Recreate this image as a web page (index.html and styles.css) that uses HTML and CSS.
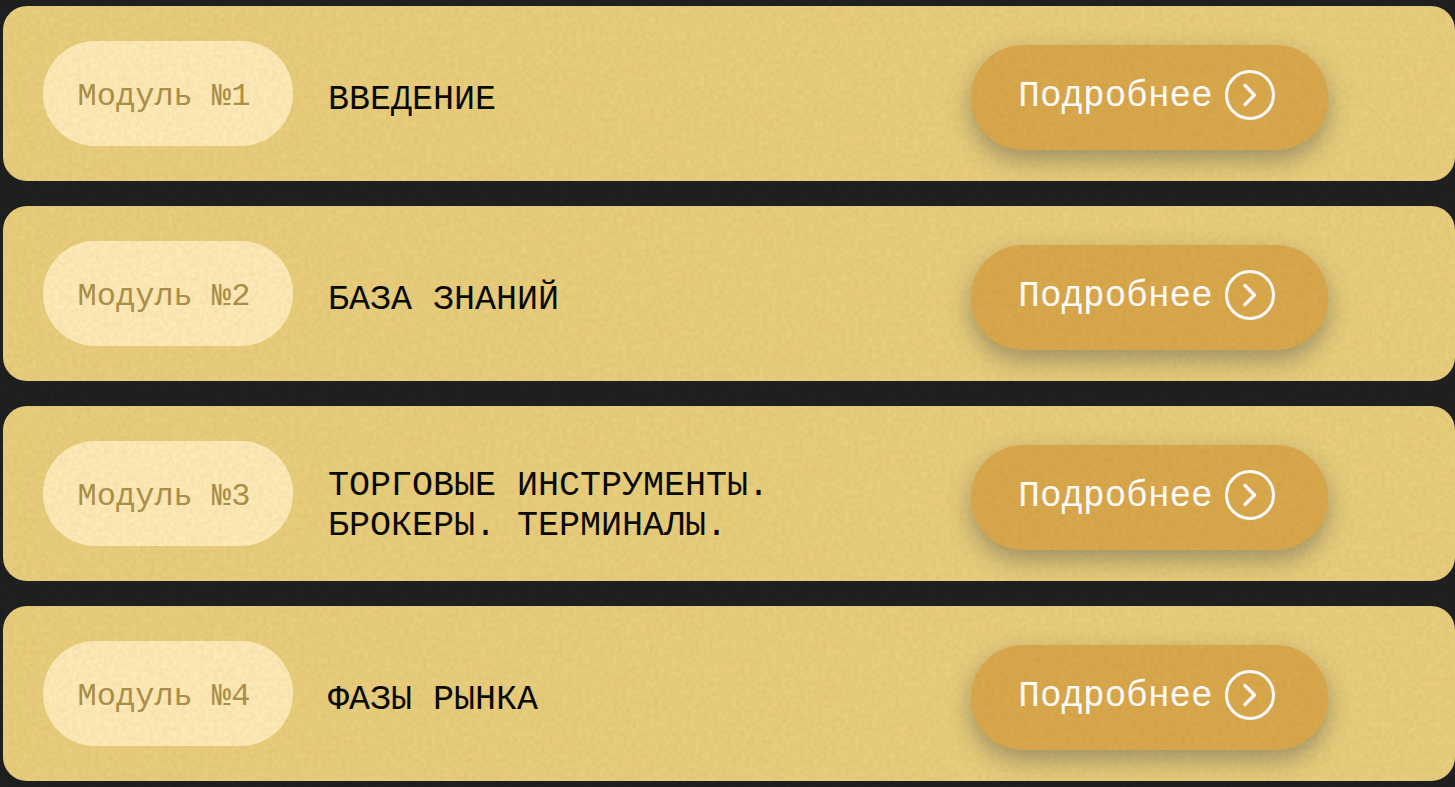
FILE: index.html
```html
<!DOCTYPE html>
<html lang="ru">
<head>
<meta charset="utf-8">
<meta name="viewport" content="width=device-width, initial-scale=1">
<title>Модули</title>
<link rel="stylesheet" href="styles.css">
</head>
<body>
<svg class="defs" aria-hidden="true">
  <symbol id="arrow" viewBox="0 0 50 50">
    <circle cx="25" cy="25" r="23.5" fill="none" stroke="currentColor" stroke-width="3"/>
    <path d="M20 15.5L29.5 25L20 34.5" fill="none" stroke="currentColor" stroke-width="3.4" stroke-linecap="round" stroke-linejoin="round"/>
  </symbol>
</svg>
<main class="modules">
  <article class="card">
    <span class="badge">Модуль №1</span>
    <h2 class="title">ВВЕДЕНИЕ</h2>
    <a class="more" href="#module-1"><span class="more-text">Подробнее</span><svg class="icon" aria-hidden="true"><use href="#arrow"/></svg></a>
  </article>
  <article class="card">
    <span class="badge">Модуль №2</span>
    <h2 class="title">БАЗА ЗНАНИЙ</h2>
    <a class="more" href="#module-2"><span class="more-text">Подробнее</span><svg class="icon" aria-hidden="true"><use href="#arrow"/></svg></a>
  </article>
  <article class="card">
    <span class="badge">Модуль №3</span>
    <h2 class="title title-long">ТОРГОВЫЕ ИНСТРУМЕНТЫ. БРОКЕРЫ. ТЕРМИНАЛЫ.</h2>
    <a class="more" href="#module-3"><span class="more-text">Подробнее</span><svg class="icon" aria-hidden="true"><use href="#arrow"/></svg></a>
  </article>
  <article class="card">
    <span class="badge">Модуль №4</span>
    <h2 class="title">ФАЗЫ РЫНКА</h2>
    <a class="more" href="#module-4"><span class="more-text">Подробнее</span><svg class="icon" aria-hidden="true"><use href="#arrow"/></svg></a>
  </article>
</main>
<svg class="grain" aria-hidden="true">
  <filter id="paper" x="0" y="0" width="100%" height="100%" color-interpolation-filters="sRGB">
    <feTurbulence type="fractalNoise" baseFrequency="0.22" numOctaves="3" seed="4"/>
    <feColorMatrix type="matrix" values="0 0 0 0 0.4  0 0 0 0 0.3  0 0 0 0 0.15  0.11 0 0 0 -0.025"/>
  </filter>
  <rect width="100%" height="100%" filter="url(#paper)"/>
</svg>
</body>
</html>
```
FILE: styles.css
```css
* {
  box-sizing: border-box;
}

body {
  margin: 0;
  background: #1d1e1f;
  font-family: "Courier New", "Liberation Mono", monospace;
}

.defs {
  display: none;
}

.modules {
  display: flex;
  flex-direction: column;
  gap: 25px;
  padding: 6px 0 6px 3px;
}

.card {
  display: flex;
  align-items: center;
  gap: 35px;
  min-height: 175px;
  padding: 31px 127px 31px 40px;
  border-radius: 24px;
  background: #e9ce7c;
}

.badge {
  display: flex;
  flex: none;
  align-items: center;
  justify-content: center;
  width: 250px;
  height: 105px;
  padding: 6px 8px 0 0;
  border-radius: 52px;
  background: #feebb7;
  color: #ad9048;
  font-size: 32px;
  line-height: 40px;
}

.title {
  flex: 1;
  max-width: 480px;
  margin: 0;
  padding-top: 12px;
  color: #060804;
  font-size: 35px;
  font-weight: 400;
  line-height: 40px;
}

.title-long {
  padding-top: 24px;
}

.more {
  display: flex;
  flex: none;
  align-items: center;
  justify-content: center;
  gap: 12px;
  width: 357px;
  height: 105px;
  margin-top: 8px;
  margin-left: auto;
  padding: 0 6px 5px 0;
  border-radius: 52px;
  background: #daa84c;
  box-shadow: 0 10px 25px rgba(50, 60, 70, 0.4);
  color: #fff;
  font-size: 36px;
  line-height: 40px;
  text-decoration: none;
}

.more-text {
  padding-top: 4px;
}

.icon {
  flex: none;
  width: 50px;
  height: 50px;
}

.grain {
  position: fixed;
  inset: 0;
  width: 100%;
  height: 100%;
  pointer-events: none;
}
```
